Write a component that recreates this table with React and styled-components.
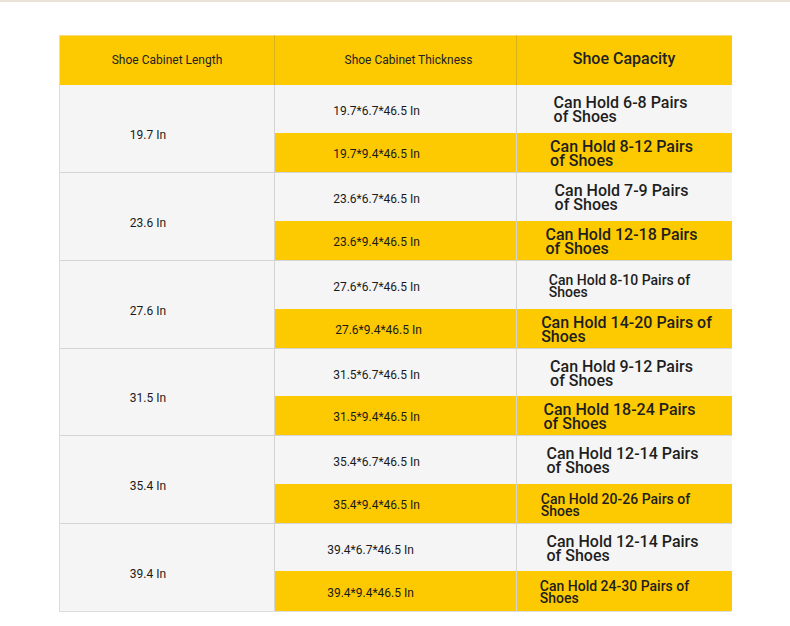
import React from 'react';
import styled, { createGlobalStyle } from 'styled-components';

const GlobalStyle = createGlobalStyle`
  body {
    margin: 0;
    background: #ffffff;
    font-family: Roboto, 'Liberation Sans', sans-serif;
    color: #222;
  }
`;

const Page = styled.div`
  width: 790px;
  height: 626px;
  background: #ffffff;
  border-top: 2px solid #ece3d8;
  box-sizing: border-box;
  padding: 33px 0 0 59px;
`;

const Table = styled.div`
  width: 672px;
  display: grid;
  grid-template-columns: 215px 242px 215px;
  border-left: 1px solid #dcdcdc;
  border-bottom: 1px solid #dcdcdc;
  box-sizing: border-box;
`;

// offset helper: shifts a centred item by `s` px via asymmetric padding
const pad = (s = 0, base = 0) =>
  `padding-left: ${Math.max(0, s) * 2}px; padding-right: ${base + Math.max(0, -s) * 2}px;`;

const HeadCell = styled.div`
  height: 50px;
  background: #fdca02;
  border-right: 1px solid ${(p) => (p.$last ? '#fdca02' : '#d9b21a')};
  border-top: 1px solid #f4dc7c;
  box-sizing: border-box;
  display: flex;
  align-items: center;
  justify-content: center;
  ${(p) => pad(p.$shift)}
  padding-bottom: ${(p) => (p.$big ? 5 : 2)}px;
  font-size: ${(p) => (p.$big ? 16 : 12)}px;
  font-weight: ${(p) => (p.$big ? 500 : 400)};
  color: #222;
`;

const LengthCell = styled.div`
  grid-row: span 2;
  background: #f5f5f5;
  border-right: 1px solid #d4d4d4;
  border-bottom: ${(p) => (p.$last ? 'none' : '1px solid #d4d4d4')};
  display: flex;
  align-items: center;
  justify-content: center;
  padding: 12px 38px 0 0;
  font-size: 12px;
  font-weight: 400;
  color: #1a1a1a;
  box-sizing: border-box;
`;

const rowHeight = (p) => (p.$alt ? 40 : p.$short ? 47 : 48);

const SizeCell = styled.div`
  height: ${rowHeight}px;
  background: ${(p) => (p.$alt ? '#fdca02' : '#f5f5f5')};
  border-right: 1px solid #d4d4d4;
  border-bottom: ${(p) => (p.$alt && !p.$last ? '1px solid #d4d4d4' : 'none')};
  display: flex;
  align-items: center;
  justify-content: center;
  ${(p) => pad(p.$shift, 38)}
  padding-top: ${(p) => (p.$alt ? 3 : 4)}px;
  box-sizing: border-box;
  font-size: 12px;
  font-weight: 400;
  color: #1a1a1a;
`;

const CapCell = styled.div`
  height: ${rowHeight}px;
  background: ${(p) => (p.$alt ? '#fdca02' : '#f5f5f5')};
  border-bottom: ${(p) => (p.$alt && !p.$last ? '1px solid #d4d4d4' : 'none')};
  display: flex;
  align-items: center;
  justify-content: center;
  ${(p) => pad(p.$shift)}
  padding-top: 2px;
  box-sizing: border-box;
`;

const CapText = styled.div`
  font-size: ${(p) => (p.$small ? 14 : 16)}px;
  line-height: ${(p) => (p.$small ? 12 : 14)}px;
  font-weight: 500;
  text-align: left;
  width: max-content;
  color: #1e1e1e;
`;

const rows = [
  {
    len: '19.7 In',
    items: [
      { size: '19.7*6.7*46.5 In', cap: ['Can Hold 6-8 Pairs', 'of Shoes'], shift: -4 },
      { size: '19.7*9.4*46.5 In', cap: ['Can Hold 8-12 Pairs', 'of Shoes'], shift: -3 },
    ],
  },
  {
    len: '23.6 In',
    items: [
      { size: '23.6*6.7*46.5 In', cap: ['Can Hold 7-9 Pairs', 'of Shoes'], shift: -3 },
      { size: '23.6*9.4*46.5 In', cap: ['Can Hold 12-18 Pairs', 'of Shoes'], shift: -3 },
    ],
  },
  {
    len: '27.6 In',
    items: [
      { size: '27.6*6.7*46.5 In', cap: ['Can Hold 8-10 Pairs of', 'Shoes'], small: true, shift: -5 },
      { size: '27.6*9.4*46.5 In', cap: ['Can Hold 14-20 Pairs of', 'Shoes'], sizeShift: 2, shift: 2 },
    ],
  },
  {
    len: '31.5 In',
    short: true,
    items: [
      { size: '31.5*6.7*46.5 In', cap: ['Can Hold 9-12 Pairs', 'of Shoes'], shift: -3 },
      { size: '31.5*9.4*46.5 In', cap: ['Can Hold 18-24 Pairs', 'of Shoes'], shift: -5 },
    ],
  },
  {
    len: '35.4 In',
    items: [
      { size: '35.4*6.7*46.5 In', cap: ['Can Hold 12-14 Pairs', 'of Shoes'], shift: -2 },
      { size: '35.4*9.4*46.5 In', cap: ['Can Hold 20-26 Pairs of', 'Shoes'], small: true, shift: -9 },
    ],
  },
  {
    len: '39.4 In',
    short: true,
    items: [
      { size: '39.4*6.7*46.5 In', cap: ['Can Hold 12-14 Pairs', 'of Shoes'], sizeShift: -6, shift: -2 },
      { size: '39.4*9.4*46.5 In', cap: ['Can Hold 24-30 Pairs of', 'Shoes'], small: true, sizeShift: -6, shift: -10 },
    ],
  },
];

function App() {
  return (
    <Page>
      <GlobalStyle />
      <Table>
        <HeadCell>Shoe Cabinet Length</HeadCell>
        <HeadCell $shift={13}>Shoe Cabinet Thickness</HeadCell>
        <HeadCell $big $last>Shoe Capacity</HeadCell>
        {rows.map((group, gi) => {
          const lastGroup = gi === rows.length - 1;
          return (
            <React.Fragment key={group.len}>
              <LengthCell $last={lastGroup}>{group.len}</LengthCell>
              {group.items.map((item, i) => {
                const alt = i === 1;
                return (
                  <React.Fragment key={item.size}>
                    <SizeCell $alt={alt} $short={group.short} $last={lastGroup} $shift={item.sizeShift}>
                      {item.size}
                    </SizeCell>
                    <CapCell $alt={alt} $short={group.short} $last={lastGroup} $shift={item.shift}>
                      <CapText $small={item.small}>
                        {item.cap[0]}
                        <br />
                        {item.cap[1]}
                      </CapText>
                    </CapCell>
                  </React.Fragment>
                );
              })}
            </React.Fragment>
          );
        })}
      </Table>
    </Page>
  );
}

export default App;
